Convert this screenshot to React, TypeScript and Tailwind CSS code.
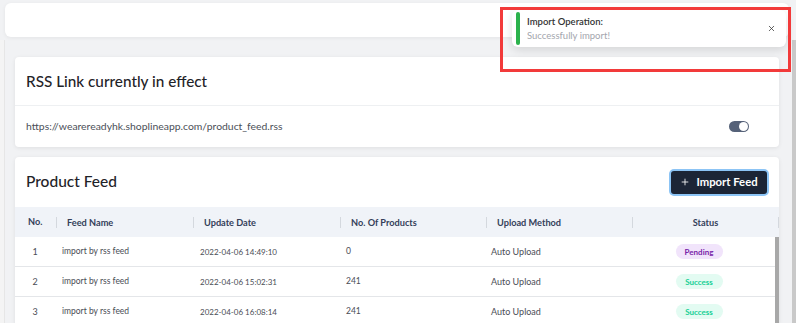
import { Plus, X } from "lucide-react";

const feeds = [
  { no: 1, name: "import by rss feed", date: "2022-04-06 14:49:10", count: "0", method: "Auto Upload", status: "Pending" },
  { no: 2, name: "import by rss feed", date: "2022-04-06 15:02:31", count: "241", method: "Auto Upload", status: "Success" },
  { no: 3, name: "import by rss feed", date: "2022-04-06 16:08:14", count: "241", method: "Auto Upload", status: "Success" },
];

const headCols = "grid grid-cols-[41px_137px_147px_146px_146px_147px]";
const bodyCols = "grid grid-cols-[40px_137px_147px_146px_146px_136px]";

function StatusBadge({ status }: { status: string }) {
  if (status === "Pending") {
    return (
      <span className="inline-flex h-[15px] w-[47px] items-center justify-center rounded-full bg-[#f1e4fb] text-[8px] font-bold text-[#7a1fa8]">
        Pending
      </span>
    );
  }
  return (
    <span className="inline-flex h-[15px] w-[47px] items-center justify-center rounded-full bg-[#e3fbf2] text-[8px] font-bold text-[#17cf95]">
      Success
    </span>
  );
}

function Toast() {
  return (
    <div className="absolute left-[512px] top-[10px] flex h-[37px] w-[274px] items-center rounded-md bg-white pl-[4px] pr-[10px] shadow-[0_3px_10px_rgba(0,0,0,0.12)]">
      <div className="h-[33px] w-[4px] rounded-full bg-[#2bb24c]" />
      <div className="ml-[7px] flex-1 leading-[14px]">
        <div className="text-[9.5px] font-semibold text-[#333]">Import Operation:</div>
        <div className="text-[9.5px] text-[#a3a6ad]">Successfully import!</div>
      </div>
      <X size={9} strokeWidth={2} className="text-[#333]" />
    </div>
  );
}

export default function App() {
  return (
    <div className="relative h-[323px] w-[796px] overflow-hidden bg-[#f1f2f4] font-['Lato',sans-serif]">
      <div className="mx-[5px] mt-[3px] h-[34px] w-[784px] rounded-md bg-white shadow-[0_1px_4px_rgba(0,0,0,0.06)]" />

      <div className="mt-[3px] flex h-[283px]">
        <div className="w-[5px] border-r border-[#e6e6e6] bg-[#f4f4f4]" />
        <div className="flex-1 pl-[10px] pr-[13px] pt-[17px]">
          {/* RSS link card */}
          <div className="rounded-sm bg-white shadow-[0_1px_4px_rgba(0,0,0,0.08)]">
            <div className="flex h-[49px] items-center border-b border-[#eef0f2] px-[11px]">
              <h2 className="text-[15.3px] font-medium text-[#1f2328]">RSS Link currently in effect</h2>
            </div>
            <div className="flex h-[41px] items-center justify-between pl-[11px] pr-[30px]">
              <span className="text-[10.4px] text-[#4b4f58]">https://wearereadyhk.shoplineapp.com/product_feed.rss</span>
              <div className="flex h-[11px] w-[20px] items-center justify-end rounded-full bg-[#566279] pr-[1px]">
                <div className="h-[9px] w-[9px] rounded-full bg-white" />
              </div>
            </div>
          </div>

          {/* Product feed card */}
          <div className="mt-[10px] rounded-sm bg-white shadow-[0_1px_4px_rgba(0,0,0,0.08)]">
            <div className="flex h-[50px] items-center justify-between pl-[11px] pr-[10px]">
              <h2 className="text-[15.5px] font-medium text-[#1f2328]">Product Feed</h2>
              <button className="flex h-[27px] w-[100px] items-center justify-center gap-[6px] whitespace-nowrap rounded-[5px] border-2 border-[#8cc4f5] bg-[#1c2536] text-[11.3px] font-bold text-white">
                <Plus size={10} strokeWidth={2} />
                Import Feed
              </button>
            </div>

            <div className={`${headCols} h-[30px] items-center bg-[#f0f3f8] text-[9.2px] font-bold text-[#34405a]`}>
              <div className="pl-[13px]">No.</div>
              <div className="border-l border-[#d4d8de] pl-[10px] leading-[11px]">Feed Name</div>
              <div className="border-l border-[#d4d8de] pl-[10px] leading-[11px]">Update Date</div>
              <div className="border-l border-[#d4d8de] pl-[10px] leading-[11px]">No. Of Products</div>
              <div className="border-l border-[#d4d8de] pl-[10px] leading-[11px]">Upload Method</div>
              <div className="border-x border-[#d4d8de] text-center leading-[11px]">Status</div>
            </div>

            <div className="flex">
              <div className="flex-1">
                {feeds.map((f) => (
                  <div key={f.no} className={`${bodyCols} h-[30px] items-center border-b border-[#e4e6e9] text-[9px] text-[#4a4d55]`}>
                    <div className="text-center">{f.no}</div>
                    <div className="pl-[7px] text-[8.5px]">{f.name}</div>
                    <div className="pl-[8px] text-[8px]">{f.date}</div>
                    <div className="pl-[7px] text-[8.5px]">{f.count}</div>
                    <div className="pl-[6px]">{f.method}</div>
                    <div className="flex justify-center">
                      <StatusBadge status={f.status} />
                    </div>
                  </div>
                ))}
              </div>
              <div className="w-[4px] bg-[#a8a8a8]" />
            </div>
          </div>
        </div>
        <div className="w-[4px] bg-[#c9c9c9]" />
      </div>

      <Toast />
      <div className="absolute left-[500px] top-[7px] h-[65px] w-[291px] border-[3px] border-[#f23a3a]" />
    </div>
  );
}
